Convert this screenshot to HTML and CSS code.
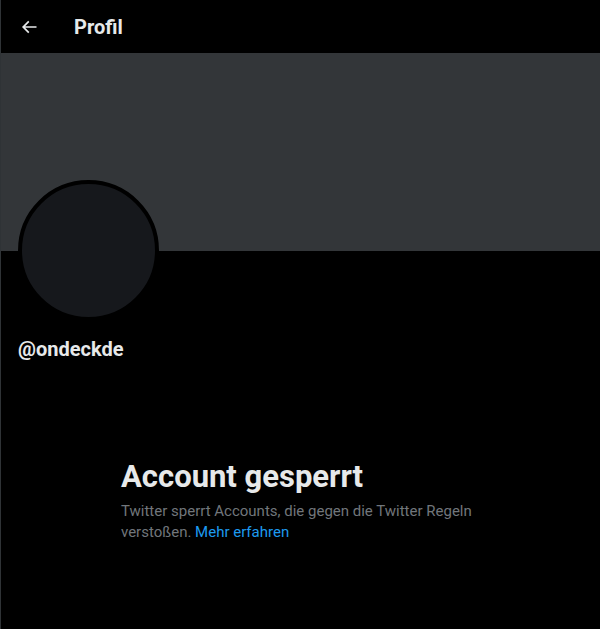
FILE: index.html
```html
<!DOCTYPE html>
<html lang="de">
<head>
<meta charset="utf-8">
<link rel="stylesheet" href="styles.css">
</head>
<body>
<div class="page">
  <header class="topbar">
    <div class="back">
      <svg viewBox="0 0 24 24" width="20" height="20"><path fill="#e7e9ea" d="M7.414 13l5.043 5.04-1.414 1.42L3.586 12l7.457-7.46 1.414 1.42L7.414 11H21v2H7.414z"/></svg>
    </div>
    <h1 class="title">Profil</h1>
  </header>
  <div class="banner"></div>
  <div class="profile">
    <div class="avatar"></div>
    <div class="handle">@ondeckde</div>
  </div>
  <section class="notice">
    <h2 class="notice-title">Account gesperrt</h2>
    <p class="notice-text">Twitter sperrt Accounts, die gegen die Twitter Regeln verstoßen. <a href="#" class="link">Mehr erfahren</a></p>
  </section>
</div>
</body>
</html>
```

FILE: styles.css
```css
* { box-sizing: border-box; }
html, body {
  margin: 0;
  padding: 0;
  background: #000;
  font-family: Roboto, "Liberation Sans", sans-serif;
  color: #e7e9ea;
}
.page {
  width: 600px;
  min-height: 629px;
  border-left: 1px solid #2f3336;
}
.topbar {
  height: 53px;
  display: flex;
  align-items: center;
  padding-left: 18px;
}
.back {
  width: 20px;
  height: 20px;
  display: flex;
  margin-right: 35px;
}
.title {
  margin: 0;
  font-size: 20px;
  font-weight: 700;
  line-height: 24px;
}
.banner {
  height: 198px;
  background: #333639;
}
.profile {
  padding: 0 17px;
}
.avatar {
  width: 141px;
  height: 141px;
  border-radius: 50%;
  background: #16181c;
  border: 4px solid #000;
  margin-top: -71px;
}
.handle {
  margin-top: 16px;
  font-size: 20px;
  font-weight: 700;
  line-height: 24px;
}
.notice {
  padding: 98px 0 0 120px;
  width: 500px;
}
.notice-title {
  margin: 0;
  font-size: 31px;
  font-weight: 700;
  line-height: 36px;
}
.notice-text {
  margin: 6px 0 0;
  font-size: 15px;
  line-height: 21px;
  color: #71767b;
}
.link {
  color: #1d9bf0;
  text-decoration: none;
}
```
